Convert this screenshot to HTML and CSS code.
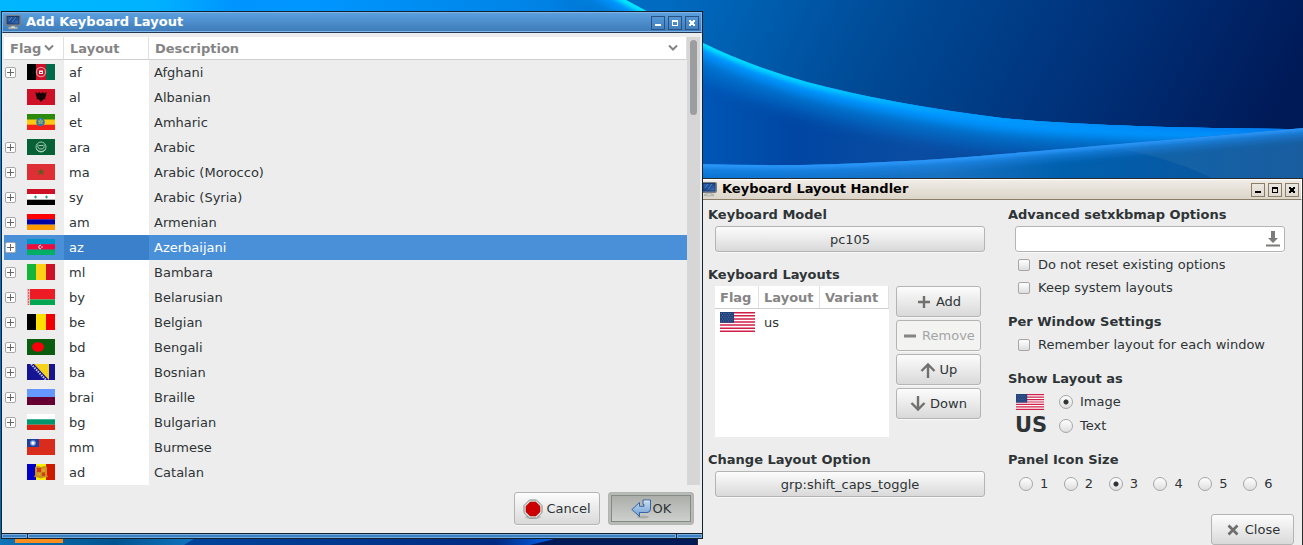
FILE: index.html
```
<!DOCTYPE html>
<html lang="en">
<head>
<meta charset="utf-8">
<title>Keyboard Layout Handler</title>
<link rel="stylesheet" href="styles.css">
</head>
<body>
<svg width="0" height="0" class="defs" aria-hidden="true">
  <defs>
    <linearGradient id="screen" x1="0" y1="0" x2="1" y2="1"><stop offset="0" stop-color="#2f66b0"/><stop offset=".5" stop-color="#1d4a8e"/><stop offset="1" stop-color="#3f7ac4"/></linearGradient>
    <linearGradient id="arrow" x1="0" y1="0" x2="0" y2="1"><stop offset="0" stop-color="#c7dcf2"/><stop offset="1" stop-color="#6f9fd3"/></linearGradient>
    <symbol id="monitor" viewBox="0 0 16 16">
      <rect x=".5" y=".5" width="15" height="10" rx="1" fill="#8f9599" stroke="#777d80"/>
      <rect x="2" y="1.500" width="12" height="7.500" fill="url(#screen)" stroke="#173a70"/>
      <path d="M4 6l3-4M7 7l4-5" stroke="#5f8fcf" stroke-width=".8"/>
      <path d="M6 11h4v1.200h2.500v1.600h-9v-1.600H6z" fill="#d2d4d0" stroke="#92968f" stroke-width=".6"/>
    </symbol>
    <symbol id="usflag" viewBox="0 0 28 16" preserveAspectRatio="none">
      <path fill="#fff" d="M0 0h28v16H0z"/>
      <path stroke="#cf2147" stroke-width="1.230" d="M0 .6h28M0 3.080h28M0 5.540h28M0 8h28M0 10.460h28M0 12.920h28M0 15.400h28"/>
      <path fill="#1d3f7a" d="M0 0h11.200v8.600H0z"/>
      <path stroke="#6c84b0" stroke-width=".6" stroke-dasharray=".9 1" d="M.6 1.200h10M1.500 2.700h9M.6 4.200h10M1.500 5.700h9M.6 7.200h10"/>
    </symbol>
    <symbol id="min" viewBox="0 0 14 14"><path fill="currentColor" d="M4 8h6v2H4z"/></symbol>
    <symbol id="max" viewBox="0 0 14 14"><path fill="currentColor" fill-rule="evenodd" d="M4 4h6v6H4zM5 6v3h4V6z"/></symbol>
    <symbol id="cls" viewBox="0 0 14 14"><path fill="currentColor" d="M4 4h2v1h2V4h2v2H9v2h1v2H8V9H6v1H4V8h1V6H4z"/></symbol>
    <symbol id="chev" viewBox="0 0 10 8"><path fill="none" stroke="#85857f" stroke-width="2" d="M1 1.500l4 4 4-4"/></symbol>
  </defs>
</svg>

<div class="desktop">
  <svg class="wallpaper" viewBox="0 0 1303 545" preserveAspectRatio="none" aria-hidden="true">
    <defs>
      <linearGradient id="sky" gradientUnits="userSpaceOnUse" x1="680" y1="-20" x2="1210" y2="240"><stop offset="0" stop-color="#006bc0"/><stop offset=".35" stop-color="#004a96"/><stop offset=".7" stop-color="#003078"/><stop offset="1" stop-color="#001a58"/></linearGradient>
      <linearGradient id="deep" x1="0" y1="0" x2="1" y2="0"><stop offset="0" stop-color="#00b8ff"/><stop offset=".12" stop-color="#00b2ff"/><stop offset=".18" stop-color="#0094ff"/><stop offset=".24" stop-color="#0096ff"/><stop offset=".42" stop-color="#0082e4"/><stop offset=".53" stop-color="#0058b8"/><stop offset=".61" stop-color="#0046a2"/><stop offset=".7" stop-color="#0a4ca2"/><stop offset="1" stop-color="#00459a"/></linearGradient>
      <linearGradient id="glow" x1="0" y1="0" x2="1" y2="0"><stop offset="0" stop-color="#00f4ff"/><stop offset=".3" stop-color="#00d2ff"/><stop offset=".5" stop-color="#00a0ff"/><stop offset="1" stop-color="#0078f0"/></linearGradient>
      <linearGradient id="lower" gradientUnits="userSpaceOnUse" x1="700" y1="0" x2="1303" y2="0"><stop offset="0" stop-color="#0673d2"/><stop offset=".4" stop-color="#1a72c2"/><stop offset=".6" stop-color="#0060ae"/><stop offset="1" stop-color="#0e5299"/></linearGradient>
      <linearGradient id="left" x1="0" y1="0" x2="0" y2="1"><stop offset="0" stop-color="#00b8ff"/><stop offset=".35" stop-color="#0078d8"/><stop offset="1" stop-color="#0068b4"/></linearGradient>
      <linearGradient id="floor" gradientUnits="userSpaceOnUse" x1="0" y1="530" x2="190" y2="530"><stop offset="0" stop-color="#0f74b8"/><stop offset=".6" stop-color="#005490"/><stop offset="1" stop-color="#0f72bd"/></linearGradient>
      <linearGradient id="floor2" gradientUnits="userSpaceOnUse" x1="190" y1="530" x2="550" y2="530"><stop offset="0" stop-color="#00449a"/><stop offset=".85" stop-color="#002a80"/><stop offset="1" stop-color="#0060e8"/></linearGradient>
      <clipPath id="under"><path d="M0 0H626Q660 18 703 43Q750 66 807 82Q890 104 1002 118Q1100 128 1303 129V400H0z"/></clipPath>
      <clipPath id="wave"><path d="M700 164Q800 167 885 162Q950 159 1002 154Q1200 137 1303 128V300H700z"/></clipPath>
      <filter id="soft" filterUnits="userSpaceOnUse" x="500" y="-100" width="900" height="400"><feGaussianBlur stdDeviation="9"/></filter>
      <filter id="mid" filterUnits="userSpaceOnUse" x="500" y="-100" width="900" height="400"><feGaussianBlur stdDeviation="4"/></filter>
      <filter id="fine" filterUnits="userSpaceOnUse" x="500" y="-100" width="900" height="400"><feGaussianBlur stdDeviation="2"/></filter>
    </defs>
    <path fill="url(#sky)" d="M0 0h1303v545H0z"/>
    <g clip-path="url(#under)" fill="none">
      <path fill="url(#deep)" d="M0 0h1303v400H0z"/>
      <path stroke="#0080dc" stroke-width="56" opacity=".75" filter="url(#soft)" d="M580 -26L626 0Q660 18 703 43Q750 66 807 82Q890 104 1002 118Q1100 128 1303 129"/>
      <path stroke="#0094ff" stroke-width="26" filter="url(#mid)" d="M580 -26L626 0Q660 18 703 43Q750 66 807 82Q890 104 1002 118Q1100 128 1303 129"/>
      <path stroke="url(#glow)" stroke-width="9" filter="url(#fine)" d="M580 -26L626 0Q660 18 703 43Q750 66 807 82Q890 104 1002 118Q1100 128 1303 129"/>
    </g>
    <g clip-path="url(#wave)" fill="none">
      <path fill="url(#lower)" d="M700 100h603v200H700z"/>
      <path fill="#2f72ad" opacity=".35" d="M1104 145Q1180 160 1215 180H1303V128z"/>
      <path stroke="#1f86e8" stroke-width="18" opacity=".8" filter="url(#mid)" d="M690 164Q800 167 885 162Q950 159 1002 154Q1200 137 1320 126"/>
      <path stroke="#2f9cff" stroke-width="5" filter="url(#fine)" d="M690 164Q800 167 885 162Q950 159 1002 154Q1200 137 1320 126"/>
    </g>
    <path fill="url(#left)" d="M0 11h4v534H0z"/>
    <path fill="#001a58" d="M0 530h700v15H0z"/>
    <path fill="url(#floor2)" d="M180 530H590L530 545H180z"/>
    <path fill="url(#floor)" d="M0 530H208L184 545H0z"/>
    <path fill="#f98e1e" d="M15 530h48v13H15z"/>
  </svg>

  <section class="window handler" aria-label="Keyboard Layout Handler">
    <header class="titlebar">
      <svg class="app-icon"><use href="#monitor"/></svg>
      <h1 class="title">Keyboard Layout Handler</h1>
      <button class="wm" aria-label="Minimize"><svg><use href="#min"/></svg></button>
      <button class="wm" aria-label="Maximize"><svg><use href="#max"/></svg></button>
      <button class="wm" aria-label="Close window"><svg><use href="#cls"/></svg></button>
    </header>
    <div class="settings">
      <div class="column">
        <section class="group">
          <h2>Keyboard Model</h2>
          <div class="indent"><button class="btn wide">pc105</button></div>
        </section>
        <section class="group">
          <h2>Keyboard Layouts</h2>
          <div class="indent layouts">
            <div class="list">
              <table>
                <thead><tr><th class="c-flag">Flag</th><th class="c-layout">Layout</th><th>Variant</th></tr></thead>
                <tbody><tr><td><svg class="flag-lg"><use href="#usflag"/></svg></td><td>us</td><td></td></tr></tbody>
              </table>
            </div>
            <div class="actions">
              <button class="btn"><svg class="ico" viewBox="0 0 16 16"><path stroke="#70706e" stroke-width="2.400" d="M8 2v12M2 8h12"/></svg>Add</button>
              <button class="btn" disabled><svg class="ico" viewBox="0 0 16 16"><path stroke="#858583" stroke-width="3" d="M2 8h12"/></svg>Remove</button>
              <button class="btn"><svg class="ico" viewBox="0 0 16 16"><path fill="none" stroke="#70706e" stroke-width="2.400" d="M8 16V3M1.500 9L8 2.500 14.500 9"/></svg>Up</button>
              <button class="btn"><svg class="ico" viewBox="0 0 16 16"><path fill="none" stroke="#70706e" stroke-width="2.400" d="M8 0v13M1.500 7L8 13.500 14.500 7"/></svg>Down</button>
            </div>
          </div>
        </section>
        <section class="group">
          <h2>Change Layout Option</h2>
          <div class="indent"><button class="btn wide">grp:shift_caps_toggle</button></div>
        </section>
      </div>
      <div class="column">
        <section class="group">
          <h2><label for="opts">Advanced setxkbmap Options</label></h2>
          <div class="indent">
            <div class="entry"><input id="opts" type="text"><svg class="down" viewBox="0 0 14 16"><path fill="#7b7b79" d="M5 0h4v7h3l-5 5-5-5h3zM0 13.500h14v2H0z"/></svg></div>
            <label class="choice first"><input type="checkbox">Do not reset existing options</label>
            <label class="choice"><input type="checkbox">Keep system layouts</label>
          </div>
        </section>
        <section class="group">
          <h2>Per Window Settings</h2>
          <div class="indent"><label class="choice"><input type="checkbox">Remember layout for each window</label></div>
        </section>
        <section class="group">
          <h2>Show Layout as</h2>
          <div class="indent show">
            <svg class="flag"><use href="#usflag"/></svg>
            <label class="choice"><input type="radio" name="show" checked>Image</label>
            <span class="us">US</span>
            <label class="choice"><input type="radio" name="show">Text</label>
          </div>
        </section>
        <section class="group">
          <h2>Panel Icon Size</h2>
          <div class="indent sizes">
            <label class="choice"><input type="radio" name="size">1</label>
            <label class="choice"><input type="radio" name="size">2</label>
            <label class="choice"><input type="radio" name="size" checked>3</label>
            <label class="choice"><input type="radio" name="size">4</label>
            <label class="choice"><input type="radio" name="size">5</label>
            <label class="choice"><input type="radio" name="size">6</label>
          </div>
        </section>
      </div>
    </div>
    <footer class="closing"><button class="btn"><svg class="ico" viewBox="0 0 16 16"><path stroke="#6e6e6c" stroke-width="2.800" d="M3.500 3.500l9 9M12.500 3.500l-9 9"/></svg>Close</button></footer>
  </section>

  <section class="window active chooser" aria-label="Add Keyboard Layout">
    <header class="titlebar">
      <svg class="app-icon"><use href="#monitor"/></svg>
      <h1 class="title">Add Keyboard Layout</h1>
      <button class="wm" aria-label="Minimize"><svg><use href="#min"/></svg></button>
      <button class="wm" aria-label="Maximize"><svg><use href="#max"/></svg></button>
      <button class="wm" aria-label="Close window"><svg><use href="#cls"/></svg></button>
    </header>
    <div class="tree">
      <table>
        <thead><tr><th class="c-flag"><span class="head">Flag<svg class="chev"><use href="#chev"/></svg></span></th><th class="c-layout">Layout</th><th><span class="head spread">Description<svg class="chev"><use href="#chev"/></svg></span></th></tr></thead>
        <tbody>
          <tr><td><div class="cell"><button class="exp" aria-label="Expand"></button><svg class="flag" viewBox="0 0 28 16"><path d="M0 0h9v16H0z"/><path fill="#cc1028" d="M9 0h10v16H9z"/><path fill="#006a4a" d="M19 0h9v16h-9z"/><circle cx="14" cy="8" r="4.600" fill="none" stroke="#e58a94" stroke-width="1.400"/><path fill="#fff" d="M12 6.500h4V10h-4z"/><path fill="#cc1028" d="M13 8h2v1h-2z"/></svg></div></td><td>af</td><td>Afghani</td></tr>
          <tr><td><div class="cell"><i class="exp-gap"></i><svg class="flag" viewBox="0 0 28 16"><path fill="#ce1126" d="M0 0h28v16H0z"/><path fill="#180305" d="M8.500 3l2.500 1.500L12 3l2 1.500L16 3l1 1.500L19.500 3l-.5 4-1 1.500.5 1.500-2.500.5L14 13l-2-2.500L9.500 10l.5-1.500L9 7z"/></svg></div></td><td>al</td><td>Albanian</td></tr>
          <tr><td><div class="cell"><i class="exp-gap"></i><svg class="flag" viewBox="0 0 28 16"><path fill="#2b8a0c" d="M0 0h28v6H0z"/><path fill="#fcc812" d="M0 5.500h28V11H0z"/><path fill="#f5221a" d="M0 10.700h28V16H0z"/><circle cx="13.500" cy="8" r="4.300" fill="#2f78a8"/><path fill="none" stroke="#9fb568" stroke-width=".8" d="M13.500 5l1.700 5-4.300-3h5.200l-4.300 3z"/></svg></div></td><td>et</td><td>Amharic</td></tr>
          <tr><td><div class="cell"><button class="exp" aria-label="Expand"></button><svg class="flag" viewBox="0 0 28 16"><path fill="#066234" d="M0 0h28v16H0z"/><circle cx="14" cy="8" r="5" fill="none" stroke="#9cc4ac"/><path fill="none" stroke="#cfe2d6" stroke-width=".8" d="M11 5.500q-1 4.500 3 4.500t3-4.500M12 6.500h4M9.500 10.500q4.500 4 9 0"/></svg></div></td><td>ara</td><td>Arabic</td></tr>
          <tr><td><div class="cell"><button class="exp" aria-label="Expand"></button><svg class="flag" viewBox="0 0 28 16"><path fill="#de3034" d="M0 0h28v16H0z"/><path fill="#54601c" d="M14 4.200l1 2.600h2.700l-2.200 1.700.9 2.700L14 9.600l-2.400 1.600.9-2.700-2.200-1.700H13z"/></svg></div></td><td>ma</td><td>Arabic (Morocco)</td></tr>
          <tr><td><div class="cell"><button class="exp" aria-label="Expand"></button><svg class="flag" viewBox="0 0 28 16"><path fill="#ce1126" d="M0 0h28v5H0z"/><path fill="#fff" d="M0 5h28v6H0z"/><path d="M0 10.700h28V16H0z"/><path fill="#35a477" d="M8.500 6.300l1.500 1.700-1.500 1.700L7 8zM19.500 6.300L21 8l-1.500 1.700L18 8z"/></svg></div></td><td>sy</td><td>Arabic (Syria)</td></tr>
          <tr><td><div class="cell"><button class="exp" aria-label="Expand"></button><svg class="flag" viewBox="0 0 28 16"><path fill="#f00" d="M0 0h28v5.400H0z"/><path fill="#0000a5" d="M0 5.300h28v5.400H0z"/><path fill="#ff9a00" d="M0 10.700h28V16H0z"/></svg></div></td><td>am</td><td>Armenian</td></tr>
          <tr class="selected"><td><div class="cell"><button class="exp" aria-label="Expand"></button><svg class="flag" viewBox="0 0 28 16"><path fill="#0093c8" d="M0 0h28v5.400H0z"/><path fill="#ef0c3c" d="M0 5.200h28v5.500H0z"/><path fill="#00ae66" d="M0 10.600h28V16H0z"/><path fill="none" stroke="#fff" d="M14 6.200q-2.300-.2-2.300 1.800t2.300 1.800"/><circle cx="15" cy="8" r=".8" fill="#fff"/></svg></div></td><td>az</td><td>Azerbaijani</td></tr>
          <tr><td><div class="cell"><button class="exp" aria-label="Expand"></button><svg class="flag" viewBox="0 0 28 16"><path fill="#14b53a" d="M0 0h9v16H0z"/><path fill="#fcd116" d="M9 0h10v16H9z"/><path fill="#ce1126" d="M19 0h9v16h-9z"/></svg></div></td><td>ml</td><td>Bambara</td></tr>
          <tr><td><div class="cell"><button class="exp" aria-label="Expand"></button><svg class="flag" viewBox="0 0 28 16"><path fill="#ed1c24" d="M0 0h28v10.500H0z"/><path fill="#00a650" d="M0 10.500h28V16H0z"/><path fill="#f4b8bb" d="M0 0h3v16H0z"/><path stroke="#e15c62" stroke-dasharray="2 1" d="M1.500 0v16"/></svg></div></td><td>by</td><td>Belarusian</td></tr>
          <tr><td><div class="cell"><button class="exp" aria-label="Expand"></button><svg class="flag" viewBox="0 0 28 16"><path d="M0 0h9v16H0z"/><path fill="#ffe000" d="M9 0h10v16H9z"/><path fill="#f00000" d="M19 0h9v16h-9z"/></svg></div></td><td>be</td><td>Belgian</td></tr>
          <tr><td><div class="cell"><button class="exp" aria-label="Expand"></button><svg class="flag" viewBox="0 0 28 16"><path fill="#0c5c10" d="M0 0h28v16H0z"/><ellipse cx="11" cy="8" rx="6" ry="4.800" fill="#fb000c"/></svg></div></td><td>bd</td><td>Bengali</td></tr>
          <tr><td><div class="cell"><button class="exp" aria-label="Expand"></button><svg class="flag" viewBox="0 0 28 16"><path fill="#151593" d="M0 0h28v16H0z"/><path fill="#f6d21a" d="M7 0h15v16z"/><path stroke="#c8c8ea" stroke-width="2" stroke-dasharray="1.500 1" d="M4 0l15 16"/></svg></div></td><td>ba</td><td>Bosnian</td></tr>
          <tr><td><div class="cell"><button class="exp" aria-label="Expand"></button><svg class="flag" viewBox="0 0 28 16"><path fill="#6699ff" d="M0 0h28v8H0z"/><path fill="#660033" d="M0 8h28v8H0z"/></svg></div></td><td>brai</td><td>Braille</td></tr>
          <tr><td><div class="cell"><button class="exp" aria-label="Expand"></button><svg class="flag" viewBox="0 0 28 16"><path fill="#fff" d="M0 0h28v5.400H0z"/><path fill="#00966e" d="M0 5.300h28v5.400H0z"/><path fill="#d62612" d="M0 10.700h28V16H0z"/></svg></div></td><td>bg</td><td>Bulgarian</td></tr>
          <tr><td><div class="cell"><i class="exp-gap"></i><svg class="flag" viewBox="0 0 28 16"><path fill="#da2c1c" d="M0 0h28v16H0z"/><path fill="#1c3fa0" d="M0 0h12v8H0z"/><circle cx="6" cy="4" r="2.800" fill="#8fa6d8"/><circle cx="6" cy="4" r="1.500" fill="#fff"/></svg></div></td><td>mm</td><td>Burmese</td></tr>
          <tr><td><div class="cell"><i class="exp-gap"></i><svg class="flag" viewBox="0 0 28 16"><path fill="#0000c8" d="M0 0h9v16H0z"/><path fill="#ffee00" d="M9 0h10v16H9z"/><path fill="#d01a00" d="M19 0h9v16h-9z"/><path fill="#c9911c" d="M8 3l3-1 3 1 3-1 3 1v8l1 2-4 .5-3 1-3-1-4-.5 1-2z"/><path fill="#d03a14" d="M10 4h4v4h-4zM15 8.500h3V12h-3z"/><path fill="#e0a020" d="M15 4.500h3V8h-3zM10.500 9H13v2.500h-2.500z"/></svg></div></td><td>ad</td><td>Catalan</td></tr>
        </tbody>
      </table>
      <div class="scrollbar"><div class="thumb"></div></div>
    </div>
    <footer class="buttons">
      <button class="btn"><svg class="ico-lg" viewBox="0 0 20 20"><ellipse cx="10" cy="18" rx="8" ry="2" fill="#bbb"/><path fill="#e9ebe8" stroke="#80867f" d="M6.500 1h7L19 6.500v7.200L13.500 19h-7L1 13.700V6.500z"/><path fill="#cc0000" stroke="#a40000" stroke-width=".6" d="M7.200 3h5.600L17 7.200v5.700L12.800 17H7.200L3 12.900V7.200z"/></svg>Cancel</button>
      <button class="btn default"><svg class="ico-lg" viewBox="0 0 20 20"><ellipse cx="12" cy="18" rx="6" ry="1.500" fill="#a9aca7"/><path fill="url(#arrow)" stroke="#3465a4" stroke-linejoin="round" d="M.8 10.500L8.500 3.500v3.800h4.500V5.500h-1V1h7.500v9q0 3.500-3.500 3.500H8.500v4z"/><path fill="none" stroke="#e4eefa" stroke-width=".8" d="M13 2.200h5.200"/></svg>OK</button>
    </footer>
    <div class="resize"><i></i><i></i><i></i></div>
  </section>
</div>
</body>
</html>
```
FILE: styles.css
```
* { box-sizing: border-box; }
body { margin: 0; font: 13px/17px "DejaVu Sans", sans-serif; color: #2e3436; }
svg { display: block; flex: none; }
button, input { font: inherit; color: inherit; margin: 0; padding: 0; }
.defs { position: absolute; }
.desktop { position: relative; height: 100vh; overflow: hidden; background: #004a96; }
.wallpaper { position: absolute; inset: 0; width: 100%; height: 100%; }

/* windows */
.window { position: absolute; background: #ededed; border: 1px solid #2b2b2b; }
.handler { top: 178px; left: 697px; right: 0; min-height: 400px; }
.chooser { top: 11px; left: 1px; right: 600px; border-color: #14222e; }
.titlebar { display: flex; align-items: center; gap: 3px; height: 21px; padding: 0 2px; border: 1px solid #fff; border-bottom: 1px solid #8c7d68; background: linear-gradient(#f0ece6, #dcd5c9); color: #000; }
.active .titlebar { border-color: #7fb5e8; border-bottom-color: #203a55; background: linear-gradient(#5b9fdf, #3d7ab8); color: #fff; box-shadow: inset 0 -1px #7fb5e8; }
.app-icon { width: 16px; height: 16px; }
.title { flex: 1; margin: 0 0 0 2px; padding-bottom: 2px; font-size: 13px; line-height: 17px; font-weight: bold; }
.wm { width: 14px; height: 14px; border: 1px solid #8c7d68; background: none; color: #000; }
.wm svg { width: 14px; height: 14px; margin: -1px; }
.active .wm { border-color: #2b5280; color: #fff; }

/* buttons */
.btn { display: flex; align-items: center; justify-content: center; gap: 4px; border: 1px solid #b4b4b4; border-radius: 3px; background: linear-gradient(#fcfcfc, #d9d9d9); box-shadow: 0 1px #f8f8f8; white-space: nowrap; }
.btn:disabled { color: #a3a5a5; background: #f3f3f2; }
.wide { width: 100%; height: 26px; }
.ico { width: 16px; height: 16px; }
.ico-lg { width: 20px; height: 20px; }

/* tables */
table { width: 100%; border-spacing: 0; table-layout: fixed; }
th, td { padding: 0 0 0 5px; text-align: left; height: 25px; }
th { height: 23px; background: #fff; color: #858585; border-bottom: 1px solid #cfcfcf; border-right: 1px solid #e0e0e0; }

/* layout chooser */
.tree { display: flex; margin: 4px 2px 0; }
.tree table { flex: 1; }
.tree .c-flag { width: 60px; }
.tree .c-layout { width: 85px; }
.tree th { padding-left: 6px; }
.tree td { padding-bottom: 1px; }
.tree td:nth-child(2) { background: #fff; }
.tree td:first-child { padding-left: 1px; }
.tree .selected { background: #4a90d9; color: #fff; }
.tree .selected td:nth-child(2) { background: #3a80cb; }
.head { display: flex; align-items: center; gap: 3px; }
.spread { justify-content: space-between; padding-right: 8px; }
.chev { width: 10px; height: 8px; }
.cell { display: flex; align-items: center; gap: 11px; }
.exp { width: 11px; height: 11px; border: 1px solid #a8a8a8; border-radius: 2px; background: linear-gradient(#666, #666) center/7px 1px no-repeat, linear-gradient(#666, #666) center/1px 7px no-repeat, #fff; }
.exp-gap { width: 11px; }
.flag { width: 28px; height: 16px; }
.scrollbar { flex: none; width: 13px; padding: 3px; background: #d6d6d6; }
.thumb { height: 75px; border-radius: 4px; background: #9c9d9e; }
.buttons { display: flex; justify-content: flex-end; gap: 8px; padding: 7px 8px 8px; }
.buttons .btn { width: 86px; height: 33px; gap: 3px; }
.buttons .default { gap: 2px; background: linear-gradient(#a8aaa6, #d2d4d1); box-shadow: inset 0 0 0 2px #b8bab6, inset 0 0 0 3px #888a85; }
.resize { display: grid; grid-template-columns: 25px 1fr 25px; gap: 1px; height: 5px; background: #14222e; padding-top: 1px; }
.resize i { background: #3d80c0; border: 1px solid #72ace2; }

/* settings window */
.settings { display: grid; grid-template-columns: 1fr 1fr; gap: 23px; padding: 6px 17px 0 10px; }
.column { display: flex; flex-direction: column; gap: 14px; }
h2 { margin: 0 0 3px; font-size: 13px; line-height: 17px; font-weight: bold; }
.indent { padding-left: 7px; }
.layouts { display: grid; grid-template-columns: 1fr 85px; gap: 7px; padding-right: 4px; }
.list { min-height: 151px; background: #fff; }
.list .c-flag { width: 44px; }
.list .c-layout { width: 61px; }
.list tbody td { height: 26px; }
.flag-lg { width: 35px; height: 20px; }
.actions { display: flex; flex-direction: column; gap: 3px; }
.actions .btn { height: 31px; }
.entry { display: flex; align-items: center; height: 26px; padding: 0 4px; border: 1px solid #b4b4b4; border-radius: 3px; background: #fff; box-shadow: 0 1px #f8f8f8; }
.entry input { flex: 1; min-width: 0; border: 0; outline: 0; background: none; }
.down { width: 14px; height: 16px; }
.choice { display: flex; align-items: center; gap: 8px; height: 23px; padding-left: 3px; }
.first { margin-top: 1px; }
.choice input { appearance: none; flex: none; width: 12px; height: 12px; border: 1px solid #a6a6a6; border-radius: 2px; background: linear-gradient(#fff, #dedede); }
.choice input[type="radio"] { width: 14px; height: 14px; border-radius: 50%; }
.choice input[type="radio"]:checked { background: radial-gradient(circle, #2e3436 2px, transparent 3px), linear-gradient(#fff, #dedede); }
.show { display: grid; grid-template-columns: 31px 1fr; gap: 1px 10px; align-items: center; justify-items: start; }
.show .flag { margin-left: 1px; }
.show .choice, .sizes .choice { gap: 7px; }
.us { font-size: 21px; line-height: 23px; font-weight: bold; }
.sizes { display: grid; grid-template-columns: repeat(6, 1fr); align-items: center; height: 25px; margin-left: 1px; }
.closing { display: flex; justify-content: flex-end; padding: 17px 8px 8px; }
.closing .btn { width: 83px; height: 31px; }
```
